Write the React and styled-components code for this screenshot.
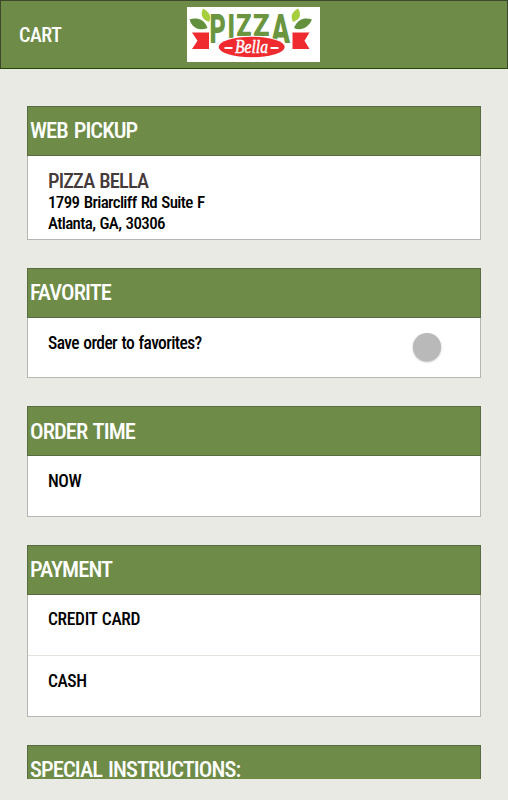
import React from 'react';
import styled, { createGlobalStyle } from 'styled-components';

const GlobalStyle = createGlobalStyle`
  * {
    box-sizing: border-box;
  }

  body {
    margin: 0;
    background-color: #e9eae4;
    font-family: "Roboto Condensed", Roboto, "Liberation Sans", sans-serif;
    font-stretch: condensed;
  }
`;

const Page = styled.div`
  height: 800px;
  overflow: hidden;
  background-color: #e9eae4;
`;

const TopBar = styled.header`
  display: grid;
  grid-template-columns: 186px 134px 1fr;
  align-items: center;
  height: 69px;
  border: 1px solid #3c4a2b;
  border-bottom-color: #234508;
  background-color: #6e8c48;
`;

const Title = styled.h1`
  margin: 1px 0 0 18px;
  color: #fff;
  font-size: 20px;
  font-weight: 500;
  letter-spacing: -0.4px;
`;

const Logo = styled.svg`
  display: block;
  width: 133px;
  height: 55px;
  background-color: #fff;
`;

const Content = styled.main`
  display: flex;
  flex-direction: column;
  gap: 28px;
  height: 710px;
  padding: 37px 27px 0;
  overflow: hidden;
`;

const Card = styled.section`
  flex: none;
  height: ${({ $height }) => $height}px;
  border: 1px solid #b5b6b2;
  border-top: 0;
  background-color: #fff;
`;

const CardHeader = styled.h2`
  height: 50px;
  margin: 0 -1px;
  padding-left: 2px;
  border: 1px solid #586b42;
  background-color: #6e8c48;
  color: #fff;
  font-size: 22.5px;
  font-weight: 500;
  letter-spacing: -0.9px;
  line-height: ${({ $line = 46 }) => $line}px;
  word-spacing: 1.5px;
`;

const Row = styled.div`
  display: flex;
  justify-content: space-between;
  height: 60px;
  padding: ${({ $top = 15 }) => $top}px 39px 0 20px;
  color: #000;
  font-size: 17.5px;
  font-weight: 500;
  letter-spacing: ${({ $spacing = -0.45 }) => $spacing}px;
  line-height: 21px;
  word-spacing: 1px;

  & + & {
    height: 61px;
    border-top: 1px solid #e3e4de;
  }
`;

const Address = styled.address`
  padding: 15px 20px 0;
  color: #000;
  font-size: 17px;
  font-style: normal;
  font-weight: 500;
  letter-spacing: -0.65px;
  line-height: 21px;
  word-spacing: 1px;
`;

const Store = styled.div`
  color: #453a3a;
  font-size: 20.5px;
  letter-spacing: -0.85px;
`;

const Toggle = styled.button`
  width: 28px;
  height: 28px;
  padding: 0;
  border: 0;
  border-radius: 50%;
  background-color: #b9b9b9;
  box-shadow: 0 1px 2px rgba(0, 0, 0, 0.3);
`;

const PizzaBellaLogo = () => (
  <Logo viewBox="0 0 133 55">
    <path d="M2.5 12.5C8 10.5 17 11 20.5 21C13 24.5 5 21 2.5 12.5Z" fill="#63903d" />
    <path d="M16 1.5C22 5 25 9 22 15C14 12 13.5 7 16 1.5Z" fill="#a6ce3e" />
    <path d="M125 12.5C119 10.5 111 11 107 21C114 24.5 122 20 125 12.5Z" fill="#63903d" />
    <path d="M111 1.5C105 5 103 9 106 15C114 12 114.5 7 111 1.5Z" fill="#a6ce3e" />
    <path d="M5 25.5H22V42H5L10.5 33.8Z" fill="#ef2b30" />
    <path d="M122.5 25.5H105.5V42H122.5L117.5 33.8Z" fill="#ef2b30" />
    <g fill="#6b963f" fontFamily="Roboto" fontStretch="normal" fontWeight="900" fontSize="20">
      <text transform="translate(22.6 36.2) scale(1.26 2.05)">P</text>
      <text transform="translate(40.4 30.5) scale(1.25 1.65)">I</text>
      <text transform="translate(49.3 28.5) scale(1.25 1.53)">Z</text>
      <text transform="translate(66.1 28.5) scale(1.35 1.53)">Z</text>
      <text transform="translate(84.3 36.2) scale(1.38 2.05)">A</text>
    </g>
    <ellipse cx="64.7" cy="40" rx="34" ry="11.2" fill="#fff" />
    <ellipse cx="64.7" cy="40" rx="33" ry="10.2" fill="#ef2b30" />
    <path d="M37.5 41H45.5M83.5 41H91.5" stroke="#fff" strokeWidth="2" />
    <text x="48" y="46.3" fill="#fff" fontFamily="Liberation Serif" fontStyle="italic" fontWeight="400" fontSize="19.5" stroke="#fff" strokeWidth="0.5" textLength="33" lengthAdjust="spacingAndGlyphs">
      Bella
    </text>
  </Logo>
);

const App = () => {
  return (
    <>
      <GlobalStyle />
      <Page>
        <TopBar>
          <Title>CART</Title>
          <PizzaBellaLogo />
        </TopBar>
        <Content>
          <Card $height={134}>
            <CardHeader>WEB PICKUP</CardHeader>
            <Address>
              <Store>PIZZA BELLA</Store>
              <div>1799 Briarcliff Rd Suite F</div>
              <div>Atlanta, GA, 30306</div>
            </Address>
          </Card>
          <Card $height={110}>
            <CardHeader>FAVORITE</CardHeader>
            <Row $spacing={-0.6}>
              Save order to favorites?
              <Toggle aria-label="Save order to favorites" />
            </Row>
          </Card>
          <Card $height={111}>
            <CardHeader $line={48}>ORDER TIME</CardHeader>
            <Row>NOW</Row>
          </Card>
          <Card $height={172}>
            <CardHeader>PAYMENT</CardHeader>
            <Row $top={14} $spacing={-0.35}>CREDIT CARD</Row>
            <Row>CASH</Row>
          </Card>
          <Card $height={50}>
            <CardHeader>SPECIAL INSTRUCTIONS:</CardHeader>
          </Card>
        </Content>
      </Page>
    </>
  );
};

export default App;
